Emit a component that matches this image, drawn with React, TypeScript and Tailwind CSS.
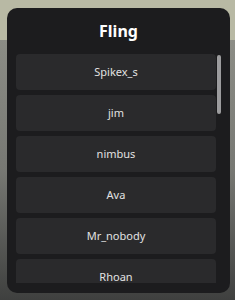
const players = ["Spikex_s", "jim", "nimbus", "Ava", "Mr_nobody", "Rhoan"];

export default function App() {
  return (
    <div className="relative w-[235px] h-[300px] overflow-hidden font-['Noto_Sans',sans-serif]">
      {/* backdrop */}
      <div className="h-[40px] bg-[#b8b9a4]" />
      <div className="h-[260px] bg-gradient-to-b from-[#8c8d86] via-[#777873] to-[#3f403f]" />

      <div className="absolute left-[7px] top-[8px] w-[223px] h-[285px] rounded-[10px] bg-[#1c1c1e] flex flex-col px-[9px]">
        <div className="h-[46px] shrink-0 flex items-center justify-center">
          <span className="text-[16px] font-bold text-white leading-none">Fling</span>
        </div>
        <div className="flex gap-[1px] h-[229px] overflow-hidden">
          <div className="flex-1 h-[229px] overflow-hidden flex flex-col gap-[5px]">
            {players.map((name) => (
              <button
                key={name}
                className="shrink-0 h-[36px] rounded-[4px] bg-[#2a2a2c] text-[#e2e2e2] text-[11px] flex items-center justify-center"
              >
                {name}
              </button>
            ))}
          </div>
          <div className="w-[4px] pt-[1px]">
            <div className="h-[59px] rounded-full bg-[#9c9c9e]" />
          </div>
        </div>
      </div>
    </div>
  );
}
